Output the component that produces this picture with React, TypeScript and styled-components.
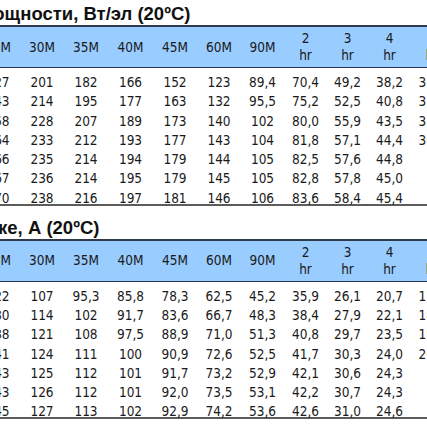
import React from 'react';
import styled, { createGlobalStyle } from 'styled-components';

type Column = { label: string[]; width: number };

const columns: Column[] = [
  { label: ['В/эл'], width: 60 },
  { label: ['5M'], width: 44 },
  { label: ['10M'], width: 44 },
  { label: ['15M'], width: 44 },
  { label: ['20M'], width: 44 },
  { label: ['30M'], width: 44 },
  { label: ['35M'], width: 44 },
  { label: ['40M'], width: 45 },
  { label: ['45M'], width: 44 },
  { label: ['60M'], width: 44 },
  { label: ['90M'], width: 43 },
  { label: ['2', 'hr'], width: 43 },
  { label: ['3', 'hr'], width: 41 },
  { label: ['4', 'hr'], width: 43 },
  { label: ['5', 'hr'], width: 42 },
  { label: ['6', 'hr'], width: 42 },
];

const powerRows: string[][] = [
  ['1,85', '460', '365', '285', '227', '201', '182', '166', '152', '123', '89,4', '70,4', '49,2', '38,2', '31,6', '26,7'],
  ['1,80', '492', '390', '305', '243', '214', '195', '177', '163', '132', '95,5', '75,2', '52,5', '40,8', '33,7', '28,5'],
  ['1,75', '525', '415', '325', '258', '228', '207', '189', '173', '140', '102', '80,0', '55,9', '43,5', '35,9', '30,4'],
  ['1,70', '540', '425', '333', '264', '233', '212', '193', '177', '143', '104', '81,8', '57,1', '44,4', '36,6', '31,0'],
  ['1,67', '546', '430', '337', '266', '235', '214', '194', '179', '144', '105', '82,5', '57,6', '44,8', '', ''],
  ['1,65', '549', '432', '339', '267', '236', '214', '195', '179', '145', '105', '82,8', '57,8', '45,0', '', ''],
  ['1,60', '556', '437', '343', '270', '238', '216', '197', '181', '146', '106', '83,6', '58,4', '45,4', '', ''],
];

const currentRows: string[][] = [
  ['1,85', '250', '195', '153', '122', '107', '95,3', '85,8', '78,3', '62,5', '45,2', '35,9', '26,1', '20,7', '17,1', '14,5'],
  ['1,80', '268', '209', '164', '130', '114', '102', '91,7', '83,6', '66,7', '48,3', '38,4', '27,9', '22,1', '18,3', '15,5'],
  ['1,75', '285', '222', '174', '138', '121', '108', '97,5', '88,9', '71,0', '51,3', '40,8', '29,7', '23,5', '19,4', '16,5'],
  ['1,70', '291', '227', '178', '141', '124', '111', '100', '90,9', '72,6', '52,5', '41,7', '30,3', '24,0', '20,0', '17,0'],
  ['1,67', '295', '230', '180', '143', '125', '112', '101', '91,7', '73,2', '52,9', '42,1', '30,6', '24,3', '', ''],
  ['1,65', '296', '231', '181', '143', '126', '112', '101', '92,0', '73,5', '53,1', '42,2', '30,7', '24,3', '', ''],
  ['1,60', '300', '234', '183', '145', '127', '113', '102', '92,9', '74,2', '53,6', '42,6', '31,0', '24,6', '', ''],
];

const tableWidth = columns.reduce((sum, c) => sum + c.width, 0);

const DischargeTable: React.FC<{ title: string; shift: number; rows: string[][] }> = ({
  title,
  shift,
  rows,
}) => (
  <Section>
    <Title $shift={shift}>{title}</Title>
    <Table>
      <colgroup>
        {columns.map((c, i) => (
          <col key={i} style={{ width: c.width }} />
        ))}
      </colgroup>
      <thead>
        <tr>
          {columns.map((c, i) => (
            <HeadCell key={i}>
              {c.label.map((line, j) => (
                <HeadLine key={j}>{line}</HeadLine>
              ))}
            </HeadCell>
          ))}
        </tr>
      </thead>
      <tbody>
        {rows.map((row, i) => (
          <Row key={i}>
            {row.map((value, j) => (
              <Cell key={j}>{value}</Cell>
            ))}
          </Row>
        ))}
      </tbody>
    </Table>
  </Section>
);

const App: React.FC = () => (
  <>
    <GlobalStyle />
    <Page>
      <Sheet>
        <DischargeTable title="Разряд при постоянной мощности, Вт/эл (20ºC)" shift={-27} rows={powerRows} />
        <DischargeTable title="Разряд при постоянном токе, А (20ºC)" shift={-31} rows={currentRows} />
      </Sheet>
    </Page>
  </>
);

const GlobalStyle = createGlobalStyle`
  html, body {
    margin: 0;
    padding: 0;
    background: #ffffff;
    overflow: hidden;
  }
`;

const Page = styled.div`
  width: 427px;
  height: 430px;
  overflow: hidden;
  background: #ffffff;
`;

const Sheet = styled.div`
  margin-left: -216px;
  padding-top: 3px;
  width: ${tableWidth}px;

  display: flex;
  flex-direction: column;
  gap: 11px;
`;

const Section = styled.section`
  display: flex;
  flex-direction: column;
`;

const Title = styled.h2<{ $shift: number }>`
  margin: 0 0 0 ${(p) => p.$shift}px;
  font: bold 18.5px/22px 'Liberation Sans', Arial, sans-serif;
  color: #111111;
  white-space: nowrap;
`;

const Table = styled.table`
  width: ${tableWidth}px;
  table-layout: fixed;
  border-collapse: collapse;
  border-top: 2px solid #2f3a4c;
  border-bottom: 2px solid #5c5c5c;

  font-family: 'DejaVu Sans Condensed', 'DejaVu Sans', sans-serif;
  font-stretch: condensed;
  font-size: 13.5px;
  color: #1a1a1a;
`;

const HeadCell = styled.th`
  height: 40px;
  padding: 0;
  background: #99ccff;
  border-bottom: 1px solid #2a3550;

  font-weight: normal;
  text-align: center;
  vertical-align: middle;
`;

const HeadLine = styled.div`
  line-height: 17px;
`;

const Row = styled.tr`
  &:first-child td {
    padding-top: 8px;
  }

  &:last-child td {
    padding-bottom: 0;
  }
`;

const Cell = styled.td`
  padding: 3.65px 0;
  line-height: 12px;
  text-align: center;
  white-space: nowrap;
`;

export default App;
